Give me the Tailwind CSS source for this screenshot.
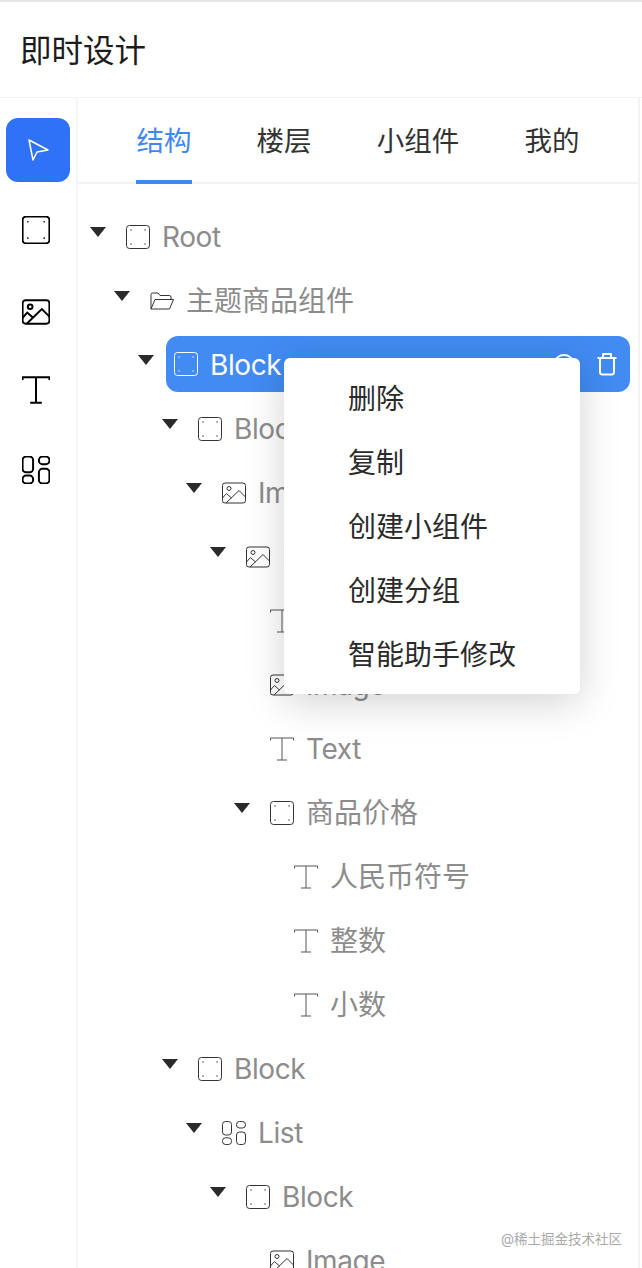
<!DOCTYPE html>
<html lang="zh">
<head>
<meta charset="UTF-8">
<title>即时设计</title>
<script src="https://cdn.jsdelivr.net/npm/@tailwindcss/browser@4"></script>
</head>
<body class="bg-white">
<!-- shared icons -->
<svg class="hidden">
  <symbol id="tri" viewBox="0 0 16 10"><path d="M0 0H16L8 10Z" fill="currentColor"/></symbol>
  <symbol id="rect" viewBox="0 0 24 24"><rect x=".5" y=".5" width="23" height="23" rx="3" fill="none" stroke="currentColor"/><g fill="currentColor"><circle cx="5" cy="5" r=".7"/><circle cx="19" cy="5" r=".7"/><circle cx="5" cy="19" r=".7"/><circle cx="19" cy="19" r=".7"/></g></symbol>
  <symbol id="image" viewBox="0 0 24 24"><g fill="none" stroke="currentColor"><rect x=".5" y="2" width="23" height="20" rx="2.5"/><circle cx="7" cy="7.5" r="2"/><path d="M.5 17 4.5 12.5 9.5 17M4 22 17 9.5 23.5 16"/></g></symbol>
  <symbol id="text" viewBox="0 0 24 24"><path d="M.5 3.5V1H23.5V3.5M12 1V23M7 23H17" fill="none" stroke="currentColor"/></symbol>
  <symbol id="grid" viewBox="0 0 24 24"><g fill="none" stroke="currentColor"><rect x=".5" y=".5" width="9" height="13.500" rx="3"/><rect x=".5" y="16.800" width="9" height="6.700" rx="3"/><rect x="14.500" y=".5" width="9" height="6.500" rx="3"/><rect x="14.500" y="11" width="9" height="12.500" rx="3"/></g></symbol>
  <symbol id="folder" viewBox="0 0 24 24"><path d="M1 20V5.500A1.500 1.500 0 0 1 2.500 4H8L10 6.500H19.500A1.500 1.500 0 0 1 21 8V10.500M1 20 5 10.500H23.500L19.500 20Z" fill="none" stroke="currentColor" stroke-linejoin="round"/></symbol>
</svg>

<div class="relative h-[1268px] w-[642px] overflow-hidden font-['Inter','Noto_Sans_CJK_SC',sans-serif]">
  <div class="h-[2px] bg-[#e4e4e4]"></div>
  <header class="flex h-[96px] items-center border-b border-[#f2f2f2] pl-[20px] pt-[2px] text-[31.500px] leading-none text-[#1c1c1c]">即时设计</header>

  <div class="flex">
    <!-- tool rail -->
    <aside class="flex h-[1170px] w-[78px] shrink-0 flex-col items-center border-r-2 border-[#f5f5f5] pr-[4px] text-black">
      <div class="ml-[4px] mt-[20px] flex h-16 w-16 items-center justify-center rounded-xl bg-[#2f72f5]">
        <svg class="h-6 w-6" viewBox="0 0 24 24"><path d="M3 2 22 12 11 14 7 22Z" fill="none" stroke="#fff" stroke-width="1.500" stroke-linejoin="round"/></svg>
      </div>
      <svg class="mt-[34px] h-7 w-7 [stroke-width:1.700px]"><use href="#rect"/></svg>
      <svg class="mt-[54px] h-7 w-7 [stroke-width:1.700px]"><use href="#image"/></svg>
      <svg class="mt-[50px] h-7 w-7 [stroke-width:1.700px]"><use href="#text"/></svg>
      <svg class="mt-[52px] h-7 w-7 [stroke-width:1.700px]"><use href="#grid"/></svg>
    </aside>

    <main class="h-[1170px] w-[562px] shrink-0 border-r-2 border-[#f3f3f3]">
      <!-- tabs -->
      <nav class="flex h-[86px] border-b-2 border-[#f2f2f2] pl-[58px] text-[27.500px] leading-none text-[#333]">
        <div class="relative flex h-[86px] w-[56px] items-center justify-center pt-[2px] text-[#4287f0]">结构<span class="absolute inset-x-0 bottom-0 h-1 bg-[#4287f0]"></span></div>
        <div class="ml-[64px] flex h-[86px] w-[56px] items-center justify-center pt-[2px]">楼层</div>
        <div class="ml-[64px] flex h-[86px] w-[84px] items-center justify-center pt-[2px]">小组件</div>
        <div class="ml-[64px] flex h-[86px] w-[56px] items-center justify-center pt-[2px]">我的</div>
      </nav>

      <!-- layer tree -->
      <ul class="pt-[21px] text-[28px] leading-none text-[#8c8c8c]">
        <li class="flex h-16 items-center pl-[12px]"><svg class="mb-[10px] h-[10px] w-4 text-[#2a2a2a]"><use href="#tri"/></svg><svg class="ml-5 h-6 w-6 text-[#333]"><use href="#rect"/></svg><span class="ml-3 tracking-[-0.4px]">Root</span></li>
        <li class="flex h-16 items-center pl-[36px]"><svg class="mb-[10px] h-[10px] w-4 text-[#2a2a2a]"><use href="#tri"/></svg><svg class="ml-5 h-6 w-6 text-[#333]"><use href="#folder"/></svg><span class="ml-3">主题商品组件</span></li>
        <li class="flex h-16 items-center pl-[60px] pr-2"><svg class="mb-[10px] h-[10px] w-4 text-[#2a2a2a]"><use href="#tri"/></svg>
          <div class="mb-[2px] ml-3 flex h-14 flex-1 items-center rounded-xl bg-[#428bf2] pl-2 pr-3 text-white">
            <svg class="h-6 w-6"><use href="#rect"/></svg><span class="ml-3 pt-[2px] tracking-[-0.4px]">Block</span>
            <svg class="ml-auto h-6 w-[26px]" viewBox="0 0 26 24"><path d="M1 12C5 5 9 3 13 3S21 5 25 12C21 19 17 21 13 21S5 19 1 12Z" fill="none" stroke="#fff" stroke-width="2"/></svg>
            <svg class="ml-[19px] h-6 w-[22px]" viewBox="0 0 22 24"><path d="M1.500 6H20.500M7 6V2H15V6M4 6V20A2.500 2.500 0 0 0 6.500 22.500H15.500A2.500 2.500 0 0 0 18 20V6" fill="none" stroke="#fff" stroke-width="2" stroke-linejoin="round"/></svg>
          </div>
        </li>
        <li class="flex h-16 items-center pl-[84px]"><svg class="mb-[10px] h-[10px] w-4 text-[#2a2a2a]"><use href="#tri"/></svg><svg class="ml-5 h-6 w-6 text-[#333]"><use href="#rect"/></svg><span class="ml-3 tracking-[-0.4px]">Block</span></li>
        <li class="flex h-16 items-center pl-[108px]"><svg class="mb-[10px] h-[10px] w-4 text-[#2a2a2a]"><use href="#tri"/></svg><svg class="ml-5 h-6 w-6 text-[#333]"><use href="#image"/></svg><span class="ml-3 tracking-[-0.4px]">Image</span></li>
        <li class="flex h-16 items-center pl-[132px]"><svg class="mb-[10px] h-[10px] w-4 text-[#2a2a2a]"><use href="#tri"/></svg><svg class="ml-5 h-6 w-6 text-[#333]"><use href="#image"/></svg><span class="ml-3 tracking-[-0.4px]">Image</span></li>
        <li class="flex h-16 items-center pl-[192px]"><svg class="h-6 w-6 text-[#555]"><use href="#text"/></svg><span class="ml-3 tracking-[-0.4px]">Text</span></li>
        <li class="flex h-16 items-center pl-[192px]"><svg class="h-6 w-6 text-[#333]"><use href="#image"/></svg><span class="ml-3 tracking-[-0.4px]">Image</span></li>
        <li class="flex h-16 items-center pl-[192px]"><svg class="h-6 w-6 text-[#555]"><use href="#text"/></svg><span class="ml-3 tracking-[-0.4px]">Text</span></li>
        <li class="flex h-16 items-center pl-[156px]"><svg class="mb-[10px] h-[10px] w-4 text-[#2a2a2a]"><use href="#tri"/></svg><svg class="ml-5 h-6 w-6 text-[#333]"><use href="#rect"/></svg><span class="ml-3">商品价格</span></li>
        <li class="flex h-16 items-center pl-[216px]"><svg class="h-6 w-6 text-[#555]"><use href="#text"/></svg><span class="ml-3">人民币符号</span></li>
        <li class="flex h-16 items-center pl-[216px]"><svg class="h-6 w-6 text-[#555]"><use href="#text"/></svg><span class="ml-3">整数</span></li>
        <li class="flex h-16 items-center pl-[216px]"><svg class="h-6 w-6 text-[#555]"><use href="#text"/></svg><span class="ml-3">小数</span></li>
        <li class="flex h-16 items-center pl-[84px]"><svg class="mb-[10px] h-[10px] w-4 text-[#2a2a2a]"><use href="#tri"/></svg><svg class="ml-5 h-6 w-6 text-[#333]"><use href="#rect"/></svg><span class="ml-3 tracking-[-0.4px]">Block</span></li>
        <li class="flex h-16 items-center pl-[108px]"><svg class="mb-[10px] h-[10px] w-4 text-[#2a2a2a]"><use href="#tri"/></svg><svg class="ml-5 h-6 w-6 text-[#333]"><use href="#grid"/></svg><span class="ml-3 tracking-[-0.4px]">List</span></li>
        <li class="flex h-16 items-center pl-[132px]"><svg class="mb-[10px] h-[10px] w-4 text-[#2a2a2a]"><use href="#tri"/></svg><svg class="ml-5 h-6 w-6 text-[#333]"><use href="#rect"/></svg><span class="ml-3 tracking-[-0.4px]">Block</span></li>
        <li class="flex h-16 items-center pl-[192px]"><svg class="h-6 w-6 text-[#333]"><use href="#image"/></svg><span class="ml-3 tracking-[-0.4px]">Image</span></li>
      </ul>
    </main>
  </div>

  <!-- context menu -->
  <div class="absolute left-[284px] top-[358px] w-[296px] rounded-md bg-white py-2 pl-16 text-[28px] leading-none text-[#2b2b2b] shadow-[0_8px_40px_rgba(0,0,0,0.18)]">
    <div class="flex h-16 items-center pt-[2px]">删除</div>
    <div class="flex h-16 items-center pt-[2px]">复制</div>
    <div class="flex h-16 items-center pt-[2px]">创建小组件</div>
    <div class="flex h-16 items-center pt-[2px]">创建分组</div>
    <div class="flex h-16 items-center pt-[2px]">智能助手修改</div>
  </div>

  <div class="absolute right-[20px] top-[1230px] text-[13.500px] leading-[18px] text-[#aaa]">@稀土掘金技术社区</div>
</div>
</body>
</html>
